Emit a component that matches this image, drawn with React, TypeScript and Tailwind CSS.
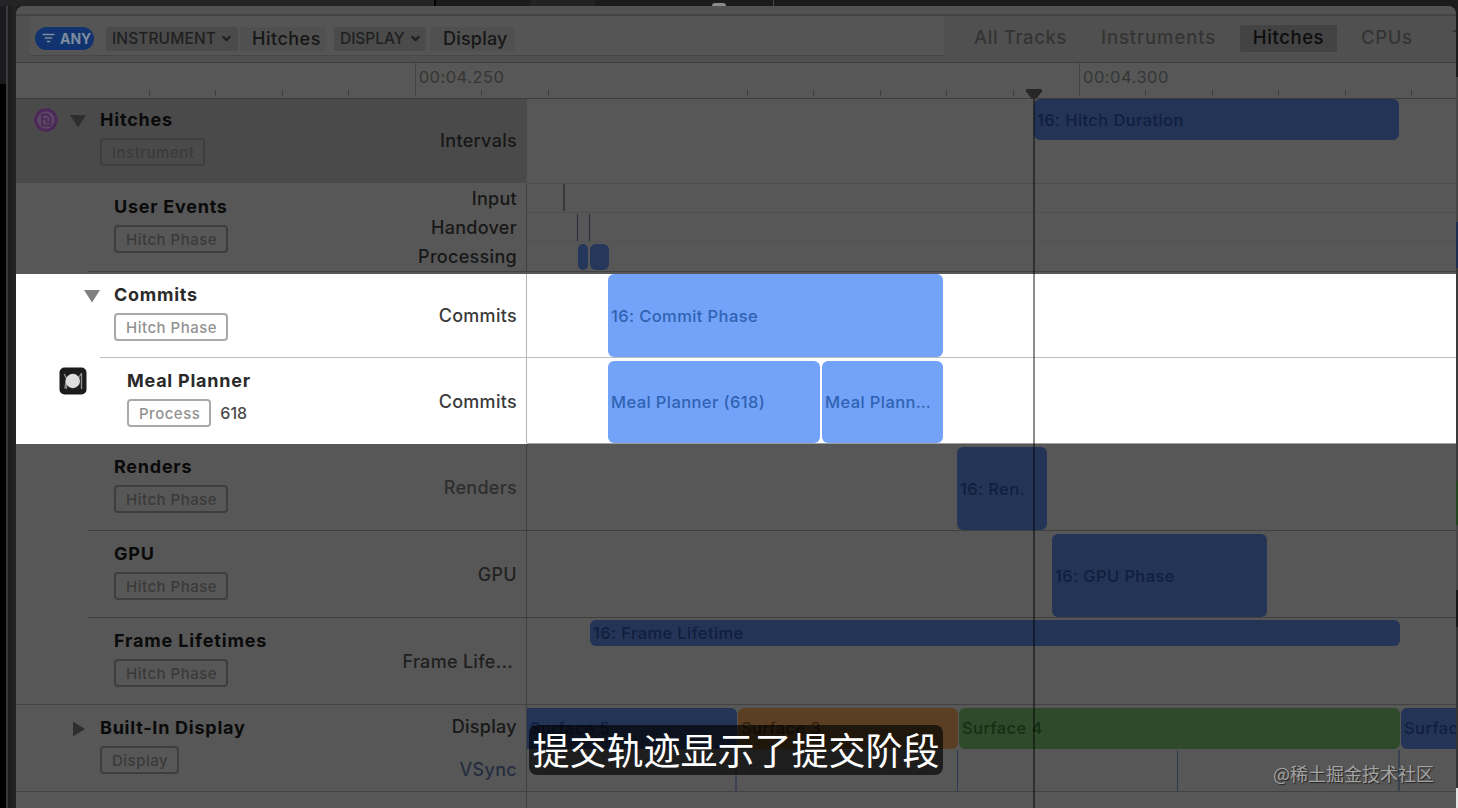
import React from 'react';

import clsx from 'clsx';
import { ChevronDown } from 'lucide-react';

type Bar = {
  start: number;
  end: number;
  label?: string;
  className: string;
};

type Lane = {
  className: string;
  bars: Bar[];
};

type Track = {
  name: string;
  badge: string;
  detail?: string;
  labels: { text: string; className: string }[];
  lanes: Lane[];
  height: string;
  indent: string;
  namePad: string;
  nameTracking: string;
  separator: string;
  arrow?: 'down' | 'right';
  icon?: 'hitches' | 'meal';
  highlighted?: boolean;
  panel?: string;
};

// left edge of the timeline area, bars are given in window coordinates
const TIMELINE_X = 527;

const BLUE = 'bg-[#233456] text-[#101f3d]';
const BRIGHT = 'bg-[#73a3f8] text-[#2f62b3]';

const TRACKS: Track[] = [
  {
    name: 'Hitches',
    badge: 'Instrument',
    labels: [{ text: 'Intervals', className: 'h-[84px] text-[#171717]' }],
    lanes: [
      {
        className: 'h-[41px]',
        bars: [{ start: 1034, end: 1399, label: '16: Hitch Duration', className: `h-[41px] rounded-md pt-px ${BLUE}` }],
      },
    ],
    height: 'h-[85px]',
    indent: 'w-[84px]',
    namePad: 'pt-[9px]',
    nameTracking: 'tracking-[0.8px]',
    separator: 'ml-[511px] bg-[#4c4c4c]',
    arrow: 'down',
    icon: 'hitches',
    panel: 'bg-[#4a4a4a]',
  },
  {
    name: 'User Events',
    badge: 'Hitch Phase',
    labels: [
      { text: 'Input', className: 'h-[29px] text-[#171717]' },
      { text: 'Handover', className: 'h-[29px] text-[#171717]' },
      { text: 'Processing', className: 'h-[29px] text-[#171717]' },
    ],
    lanes: [
      {
        className: 'h-[29px] border-b border-[#505050]',
        bars: [{ start: 563, end: 565, className: 'h-[27px] bg-[#36383d]' }],
      },
      {
        className: 'h-[29px] border-b border-[#535353] pt-px',
        bars: [
          { start: 577, end: 578, className: 'h-[27px] bg-[#282b38]' },
          { start: 589, end: 590, className: 'h-[27px] bg-[#282b38]' },
        ],
      },
      {
        className: 'h-[29px] pt-[2px]',
        bars: [
          { start: 578, end: 588, className: 'h-[26px] rounded-[5px] bg-[#25375a]' },
          { start: 590, end: 609, className: 'h-[26px] rounded-md bg-[#25375a]' },
        ],
      },
    ],
    height: 'h-[90px]',
    indent: 'w-[98px]',
    namePad: 'pt-[11px]',
    nameTracking: 'tracking-[0.75px]',
    separator: 'ml-[72px] mb-[2px] bg-[#414141]',
  },
  {
    name: 'Commits',
    badge: 'Hitch Phase',
    labels: [{ text: 'Commits', className: 'h-[83px] text-[#3a3a3a]' }],
    lanes: [
      {
        className: 'h-[83px]',
        bars: [{ start: 608, end: 943, label: '16: Commit Phase', className: `h-[83px] rounded-md pt-px ${BRIGHT}` }],
      },
    ],
    height: 'h-[84px]',
    indent: 'w-[98px]',
    namePad: 'pt-[9px]',
    nameTracking: 'tracking-[0.75px]',
    separator: 'ml-[84px] bg-[#bdbdbd]',
    arrow: 'down',
    highlighted: true,
  },
  {
    name: 'Meal Planner',
    badge: 'Process',
    detail: '618',
    labels: [{ text: 'Commits', className: 'h-[86px] pt-[2px] text-[#3a3a3a]' }],
    lanes: [
      {
        className: 'h-[86px] pt-[3px]',
        bars: [
          { start: 608, end: 820, label: 'Meal Planner (618)', className: `h-[82px] rounded-md pt-px ${BRIGHT}` },
          { start: 822, end: 943, label: 'Meal Plann…', className: `h-[82px] rounded-md pt-px ${BRIGHT}` },
        ],
      },
    ],
    height: 'h-[86px]',
    indent: 'w-[111px]',
    namePad: 'pt-[11px]',
    nameTracking: 'tracking-[0.75px]',
    separator: 'ml-[511px] bg-[#a0a0a0]',
    icon: 'meal',
    highlighted: true,
  },
  {
    name: 'Renders',
    badge: 'Hitch Phase',
    labels: [{ text: 'Renders', className: 'h-[87px] pt-px text-[#2e2e2e]' }],
    lanes: [
      {
        className: 'h-[86px] pt-[3px]',
        bars: [{ start: 957, end: 1047, label: '16: Ren.', className: `h-[83px] rounded-md pt-px ${BLUE}` }],
      },
    ],
    height: 'h-[87px]',
    indent: 'w-[98px]',
    namePad: 'pt-[11px]',
    nameTracking: 'tracking-[0.75px]',
    separator: 'ml-[72px] bg-[#3f3f3f]',
  },
  {
    name: 'GPU',
    badge: 'Hitch Phase',
    labels: [{ text: 'GPU', className: 'h-[87px] pt-px text-[#222222]' }],
    lanes: [
      {
        className: 'h-[86px] pt-[3px]',
        bars: [{ start: 1052, end: 1267, label: '16: GPU Phase', className: `h-[83px] rounded-md pt-px ${BLUE}` }],
      },
    ],
    height: 'h-[87px]',
    indent: 'w-[98px]',
    namePad: 'pt-[11px]',
    nameTracking: 'tracking-[0.75px]',
    separator: 'ml-[72px] bg-[#3f3f3f]',
  },
  {
    name: 'Frame Lifetimes',
    badge: 'Hitch Phase',
    labels: [{ text: 'Frame Life...', className: 'h-[87px] pr-[4px] text-[#1f1f1f]' }],
    lanes: [
      {
        className: 'h-[86px] pt-[2px]',
        bars: [{ start: 590, end: 1400, label: '16: Frame Lifetime', className: `h-[26px] rounded-md pt-px ${BLUE}` }],
      },
    ],
    height: 'h-[87px]',
    indent: 'w-[98px]',
    namePad: 'pt-[11px]',
    nameTracking: 'tracking-[0.85px]',
    separator: 'bg-[#424242]',
  },
  {
    name: 'Built-In Display',
    badge: 'Display',
    labels: [
      { text: 'Display', className: 'h-[43px] text-[#171717]' },
      { text: 'VSync', className: 'h-[43px] pt-px text-[#262d40]' },
    ],
    lanes: [
      {
        className: 'h-[45px] pt-[3px]',
        bars: [
          { start: 527, end: 737, label: 'Surface 5', className: `h-[41px] rounded-r-md ${BLUE}` },
          { start: 738, end: 958, label: 'Surface 3', className: 'h-[41px] rounded-md bg-[#5b3f24] text-[#33210f]' },
          { start: 959, end: 1400, label: 'Surface 4', className: 'h-[41px] rounded-md bg-[#2e4a2b] text-[#152e15]' },
          { start: 1401, end: 1456, label: 'Surface', className: `h-[41px] rounded-l-md ${BLUE}` },
        ],
      },
      {
        className: 'h-[41px]',
        bars: [
          { start: 735, end: 737, className: 'h-[41px] bg-[#3a4252]' },
          { start: 957, end: 958, className: 'h-[41px] bg-[#2c3854]' },
          { start: 1177, end: 1178, className: 'h-[41px] bg-[#2c3854]' },
          { start: 1398, end: 1400, className: 'h-[41px] bg-[#3a4252]' },
        ],
      },
    ],
    height: 'h-[87px]',
    indent: 'w-[84px]',
    namePad: 'pt-[11px]',
    nameTracking: 'tracking-[0.75px]',
    separator: 'bg-[#424242]',
    arrow: 'right',
  },
];

function HitchesIcon() {
  return (
    <svg width="24" height="24" viewBox="0 0 24 24" fill="none">
      <circle cx="12" cy="12" r="10.2" fill="#5a4862" stroke="#4d2759" strokeWidth="3" />
      <path d="M8 6.500h5.500l3 3v8H8z" stroke="#4d2759" strokeWidth="1.8" strokeLinejoin="round" />
      <path d="M8 11h4.500v3H16" stroke="#4d2759" strokeWidth="1.6" />
    </svg>
  );
}

function MealIcon() {
  return (
    <svg width="28" height="28" viewBox="0 0 28 28" fill="none">
      <rect x="0.5" y="0.5" width="27" height="27" rx="5" fill="#1c1c1c" />
      <path d="M5.500 7.500l2 4v10M7.500 11l-1.500 10" stroke="#8d8d8d" strokeWidth="1.4" strokeLinecap="round" />
      <path d="M22.500 6.500v15M22 7l-2.500 4" stroke="#8d8d8d" strokeWidth="1.4" strokeLinecap="round" />
      <circle cx="13.800" cy="14" r="7.200" fill="#dedede" />
    </svg>
  );
}

function Disclosure({ direction, highlighted }: { direction: 'down' | 'right'; highlighted?: boolean }) {
  return (
    <svg width="16" height="16" viewBox="0 0 16 16" className={highlighted ? 'fill-[#808080]' : 'fill-[#2f2e2c]'}>
      <path d={direction === 'down' ? 'M0 2h16L8 14.500z' : 'M3 0.500v15L15 8z'} />
    </svg>
  );
}

function TrackBar({ bar, previousEnd }: { bar: Bar; previousEnd: number }) {
  return (
    <div
      className={clsx(
        'flex shrink-0 items-center overflow-hidden text-[16.5px] leading-none font-medium tracking-[0.4px] whitespace-nowrap',
        bar.label && 'pl-[3px]',
        bar.className
      )}
      style={{ marginLeft: bar.start - previousEnd, width: bar.end - bar.start }}
    >
      {bar.label}
    </div>
  );
}

function TrackRow({ track }: { track: Track }) {
  const { highlighted } = track;

  return (
    <div className={clsx('flex shrink-0 flex-col', track.height, highlighted ? 'bg-white' : 'bg-[#575757]')}>
      <div className="flex min-h-0 flex-1">
        <div
          className={clsx(
            'flex w-[511px] shrink-0 border-r',
            track.panel,
            highlighted ? 'border-[#b4b4b4]' : track.panel ? 'border-[#4c4c4c]' : 'border-[#3f3f3f]'
          )}
        >
          <div className={clsx('flex shrink-0', track.indent, track.namePad)}>
            {track.icon === 'hitches' && (
              <div className="ml-[18px]">
                <HitchesIcon />
              </div>
            )}
            {track.icon === 'meal' && (
              <div className="-mt-[2px] ml-[43px]">
                <MealIcon />
              </div>
            )}
            {track.arrow && (
              <div className="mr-[14px] ml-auto pt-[5px]">
                <Disclosure direction={track.arrow} highlighted={highlighted} />
              </div>
            )}
          </div>

          <div className={clsx('flex flex-col items-start whitespace-nowrap', track.namePad)}>
            <div
              className={clsx(
                'text-[18px] leading-[24px] font-bold',
                track.nameTracking,
                highlighted ? 'text-[#2a2a2a]' : 'text-[#0a0a0a]'
              )}
            >
              {track.name}
            </div>
            <div className="mt-[6px] flex items-center gap-[9px]">
              <span
                className={clsx(
                  'flex h-[28px] items-center rounded-[4px] border-2 pr-[9px] pl-[10px] text-[15px] leading-none font-medium tracking-[0.5px]',
                  highlighted ? 'border-[#a9a9a9] text-[#929292]' : 'border-[#3e3e3e] text-[#3a3a3a]'
                )}
              >
                {track.badge}
              </span>
              {track.detail && (
                <span className="text-[16px] leading-none font-medium text-[#4a4a4a]">{track.detail}</span>
              )}
            </div>
          </div>

          <div className="ml-auto flex flex-col items-end pr-[9px]">
            {track.labels.map((label) => (
              <div
                key={label.text}
                className={clsx(
                  'flex shrink-0 items-center text-[18px] leading-none font-medium tracking-[0.3px]',
                  label.className
                )}
              >
                {label.text}
              </div>
            ))}
          </div>
        </div>

        <div className="flex min-w-0 flex-1 flex-col overflow-hidden">
          {track.lanes.map((lane, i) => (
            <div key={i} className={clsx('flex shrink-0', lane.className)}>
              {lane.bars.map((bar, j) => (
                <TrackBar key={bar.start} bar={bar} previousEnd={j === 0 ? TIMELINE_X : lane.bars[j - 1].end} />
              ))}
            </div>
          ))}
        </div>
      </div>
      <div className={clsx('h-px shrink-0', track.separator)} />
    </div>
  );
}

function Toolbar() {
  return (
    <div className="flex h-[49px] shrink-0 border-t-2 border-b border-t-[#434343] border-b-[#3f3f3f] bg-[#505050] font-medium whitespace-nowrap">
      <div className="mb-[6px] ml-[14px] flex w-[914px] shrink-0 items-center border-b border-[#474747] bg-[#555555] pt-[7px] pb-px">
        <div className="ml-[5px] flex h-[23px] w-[59px] items-center gap-[5px] rounded-full bg-[#11336f] pl-[7px] text-[#7d8b9f]">
          <svg width="13" height="11" viewBox="0 0 13 11" fill="none">
            <path d="M0.500 1.500h12M2.800 5h7.400M4.800 8.500h3.400" stroke="currentColor" strokeWidth="1.6" />
          </svg>
          <span className="text-[14px] leading-none font-bold">ANY</span>
        </div>
        <div className="ml-[12px] flex h-[24px] w-[132px] items-center rounded-[3px] bg-[#4b4b4b] pl-[6px] text-[15.5px] text-[#202020]">
          <span className="tracking-[0.1px]">INSTRUMENT</span>
          <ChevronDown className="ml-[4px] size-[13px]" strokeWidth={4} />
        </div>
        <div className="ml-[2px] flex h-[24px] w-[86px] items-center rounded-[3px] bg-[#505050] pl-[12px] text-[18px] tracking-[0.5px] text-[#161616]">
          Hitches
        </div>
        <div className="ml-[8px] flex h-[24px] w-[92px] items-center rounded-[3px] bg-[#4b4b4b] pl-[6px] text-[15.5px] text-[#202020]">
          <span className="-tracking-[0.05px]">DISPLAY</span>
          <ChevronDown className="ml-[5px] size-[13px]" strokeWidth={4} />
        </div>
        <div className="ml-[4px] flex h-[24px] w-[85px] items-center rounded-[3px] bg-[#505050] pl-[13px] text-[18px] tracking-[0.2px] text-[#161616]">
          Display
        </div>
      </div>

      <div className="flex min-w-0 flex-1 overflow-hidden pt-[9px] text-[18.5px] leading-[25px] tracking-[0.6px] text-[#343434]">
        <div className="ml-[30px] w-[127px] shrink-0">All Tracks</div>
        <div className="w-[139px] shrink-0 tracking-[0.9px]">Instruments</div>
        <div className="h-[27px] w-[97px] shrink-0 rounded-[2px] bg-[#434343] text-center text-[#0d0d0d]">Hitches</div>
        <div className="ml-[24px] w-[91px] shrink-0">CPUs</div>
        <div className="shrink-0">Threads</div>
      </div>
    </div>
  );
}

function Ruler() {
  const marks: Record<number, string> = { 6: '00:04.250', 16: '00:04.300' };

  return (
    <div className="flex h-[36px] shrink-0 items-end overflow-hidden border-b border-[#3c3c3c] bg-[#575757] pb-[2px] whitespace-nowrap">
      {Array.from({ length: 22 }, (_, i) =>
        marks[i] ? (
          <div
            key={i}
            className="h-[33px] w-[66.45px] shrink-0 border-l border-[#434343] pt-[4px] pl-[3px] text-[16.5px] leading-[20px] tracking-[0.5px] text-[#353535]"
          >
            {marks[i]}
          </div>
        ) : (
          <div
            key={i}
            className={clsx(
              'h-[6px] w-[66.45px] shrink-0 border-l',
              i < 2 || i === 9 || i === 10 ? 'border-[#555555]' : 'border-[#3f3f3f]'
            )}
          />
        )
      )}
    </div>
  );
}

function Playhead() {
  return (
    <div className="absolute top-[83px] bottom-0 left-[1009px] flex w-[18px] flex-col items-center">
      <svg width="18" height="10" viewBox="0 0 18 10" className="shrink-0">
        <path d="M2 0h14q1 0 1 1v1.500L11.500 9.500h-5L1 2.500V1q0-1 1-1z" fill="#272727" />
      </svg>
      <div className="w-[2px] flex-1 bg-black/45" />
    </div>
  );
}

export default function App() {
  return (
    <div className="relative flex h-[808px] w-[1458px] flex-col overflow-hidden bg-[#1b1b1b] font-['Inter','Noto_Sans_CJK_SC',sans-serif]">
      {/* strip of the windows behind */}
      <div className="flex h-[6px] shrink-0">
        <div className="w-[434px] bg-[#242427]" />
        <div className="w-[2px] bg-black" />
        <div className="w-[94px] bg-[#1b1b1b]" />
        <div className="w-[65px] bg-[#222222]" />
        <div className="mt-[3px] ml-[117px] h-[3px] w-[14px] rounded-t-sm bg-[#8a8a8a]" />
        <div className="ml-[47px] w-px bg-[#444444]" />
      </div>

      <div className="flex min-h-0 flex-1">
        <div className="flex w-[6px] shrink-0 flex-col">
          <div className="h-[78px] bg-[#1b1b1f]" />
          <div className="flex-1 bg-black" />
        </div>
        <div className="w-[2px] shrink-0 bg-[#3a3a3a]" />
        <div className="w-[8px] shrink-0 bg-gradient-to-r from-[#1b1b1b] to-[#242424]" />

        <div className="relative flex w-[1440px] shrink-0 flex-col overflow-hidden rounded-t-[8px] bg-[#575757]">
          <div className="h-[8px] shrink-0 bg-[#525252]" />
          <Toolbar />
          <Ruler />
          {TRACKS.map((track) => (
            <TrackRow key={track.name} track={track} />
          ))}
          <div className="w-[511px] flex-1 border-r border-[#3f3f3f]" />
          <Playhead />
        </div>

        <div className="flex w-[2px] shrink-0 flex-col">
          <div className="h-[71px] bg-[#1b1b1b]" />
          <div className="h-[145px] bg-[#454545]" />
          <div className="h-[46px] bg-[#1d2d50]" />
          <div className="h-[213px] bg-[#393939]" />
          <div className="h-[44px] bg-[#23441f]" />
          <div className="h-[65px] bg-[#454545]" />
          <div className="h-[37px] bg-[#171717]" />
          <div className="h-[161px] bg-[#333333]" />
          <div className="flex-1 bg-[#e4e4e4]" />
        </div>
      </div>

      {/* subtitle */}
      <div className="absolute top-[725px] left-[529px] flex h-[50px] w-[414px] items-center justify-center rounded-[8px] bg-black/65 pb-[2px] font-['Noto_Sans_CJK_SC',sans-serif] text-[37px] leading-none whitespace-nowrap text-white">
        提交轨迹显示了提交阶段
      </div>

      <div className="absolute top-[760px] left-[1273px] font-['Noto_Sans_CJK_SC',sans-serif] text-[18px] leading-[26px] whitespace-nowrap text-[#a3a3a3] [text-shadow:1px_1px_1px_#222222]">
        @稀土掘金技术社区
      </div>
    </div>
  );
}
